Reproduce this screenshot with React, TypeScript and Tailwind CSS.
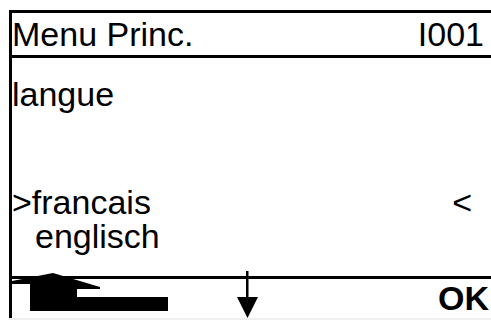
import React from "react";

export default function App() {
  return (
    <div className="w-[491px] h-[320px] bg-white overflow-hidden pt-[10px] pl-[9px] font-['Liberation_Sans',Arial,sans-serif] text-black">
      <div className="h-[308px] border-l-[3px] border-t-[3px] border-black flex flex-col">
        {/* Header */}
        <div className="h-[45px] border-b-[3px] border-black flex items-center justify-between text-[34px] leading-[42px] pr-[7px]">
          <span>Menu Princ.</span>
          <span>I001</span>
        </div>
        {/* Body */}
        <div className="flex-1 flex flex-col text-[34px] leading-[33px]">
          <div className="mt-[20px]">langue</div>
          <div className="mt-[75px] flex justify-between pr-[19px]">
            <span>&gt;francais</span>
            <span>&lt;</span>
          </div>
          <div className="pl-[23px] mt-[1px]">englisch</div>
        </div>
        {/* Bottom bar */}
        <div className="relative h-[42px] border-t-[3px] border-black flex items-center justify-end pr-[2px]">
          <span className="text-[34px] font-bold leading-[39px]">OK</span>
          <svg
            className="absolute left-0 top-[-8px]"
            width="479"
            height="49"
            viewBox="0 0 479 49"
          >
            <polygon
              points="41,2 88,16 88,18 65,18 65,26 156,26 156,40 18,40 18,13 0,13 0,10"
              fill="black"
              strokeLinejoin="round"
            />
            <rect x="234" y="0" width="2.5" height="27" fill="black" />
            <polygon points="225,26 246,26 235.5,47" fill="black" />
          </svg>
        </div>
      </div>
      <div className="h-[2px] bg-[#f0f0f0]" />
    </div>
  );
}
